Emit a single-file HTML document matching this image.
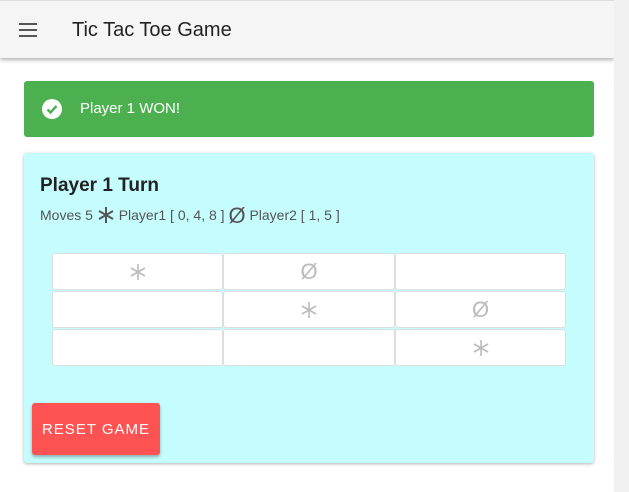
<!DOCTYPE html>
<html><head><style>
body{margin:0;width:629px;height:492px;overflow:hidden;background:#fff;font-family:"Liberation Sans",sans-serif;position:relative}
.hdr{position:absolute;left:0;top:0;width:614px;height:57px;background:#f5f5f5;border-top:1px solid #ddd;box-shadow:0 2px 4px rgba(0,0,0,.3)}
.sb{position:absolute;left:614px;top:0;width:15px;height:492px;background:#f1f1f1}
.ham{position:absolute;left:19px;top:22px;width:18px}
.ham i{display:block;height:2px;background:#555;margin-bottom:4px}
.title{position:absolute;left:72px;top:18px;font-size:20px;color:#222}
.alert{position:absolute;left:24px;top:81px;width:570px;height:56px;background:#4caf50;border-radius:3px;color:#fff}
.alert .t{position:absolute;left:56px;top:19px;font-size:15px}
.card{position:absolute;left:24px;top:153px;width:570px;height:310px;background:#c5fcfd;border-radius:3px;box-shadow:0 1px 3px rgba(0,0,0,.3)}
.h{position:absolute;left:16px;top:22px;font-size:19px;font-weight:bold;color:#222}
.sub{position:absolute;left:16px;top:50px;font-size:14px;color:#555;white-space:nowrap}
.cell{position:absolute;background:#fff;border:1px solid #ddd;border-radius:3px;box-sizing:border-box;height:37px;display:flex;align-items:center;justify-content:center;color:#bbb;font-size:22px}
.btn{position:absolute;left:8px;top:250px;width:128px;height:52px;background:#ff5252;border-radius:3px;color:#fff;font-size:15px;letter-spacing:1px;text-align:center;line-height:54px;box-shadow:0 2px 3px rgba(0,0,0,.3)}
</style></head><body>
<div class="hdr"><div class="ham"><i></i><i></i><i></i></div><div class="title">Tic Tac Toe Game</div></div>
<div class="sb"></div>
<div class="alert"><svg style="position:absolute;left:18px;top:18px" width="20" height="20" viewBox="0 0 20 20"><circle cx="10" cy="10" r="10" fill="#fff"/><path d="M5.5 10.5l3 3 6-6.5" stroke="#4caf50" stroke-width="2.4" fill="none"/></svg><div class="t">Player 1 WON!</div></div>
<div class="card">
<div class="h">Player 1 Turn</div>
<div class="sub">Moves 5 <svg width="18" height="18" viewBox="0 0 18 18" style="vertical-align:-4px"><g stroke="#555" stroke-width="2"><path d="M9 1v16M2 5l14 8M2 13l14-8"/></g></svg> Player1 [ 0, 4, 8 ] <span style="font-size:22px;vertical-align:-3px">Ø</span> Player2 [ 1, 5 ]</div>
<div class="cell" style="left:28px;top:100px;width:171px"><svg width="18" height="18" viewBox="0 0 18 18"><g stroke="#bbb" stroke-width="1.6"><path d="M9 1v16M2 5l14 8M2 13l14-8"/></g></svg></div>
<div class="cell" style="left:199px;top:100px;width:172px">Ø</div>
<div class="cell" style="left:371px;top:100px;width:171px"></div>
<div class="cell" style="left:28px;top:138px;width:171px"></div>
<div class="cell" style="left:199px;top:138px;width:172px"><svg width="18" height="18" viewBox="0 0 18 18"><g stroke="#bbb" stroke-width="1.6"><path d="M9 1v16M2 5l14 8M2 13l14-8"/></g></svg></div>
<div class="cell" style="left:371px;top:138px;width:171px">Ø</div>
<div class="cell" style="left:28px;top:176px;width:171px"></div>
<div class="cell" style="left:199px;top:176px;width:172px"></div>
<div class="cell" style="left:371px;top:176px;width:171px"><svg width="18" height="18" viewBox="0 0 18 18"><g stroke="#bbb" stroke-width="1.6"><path d="M9 1v16M2 5l14 8M2 13l14-8"/></g></svg></div>
<div class="btn">RESET GAME</div>
</div>
</body></html>
